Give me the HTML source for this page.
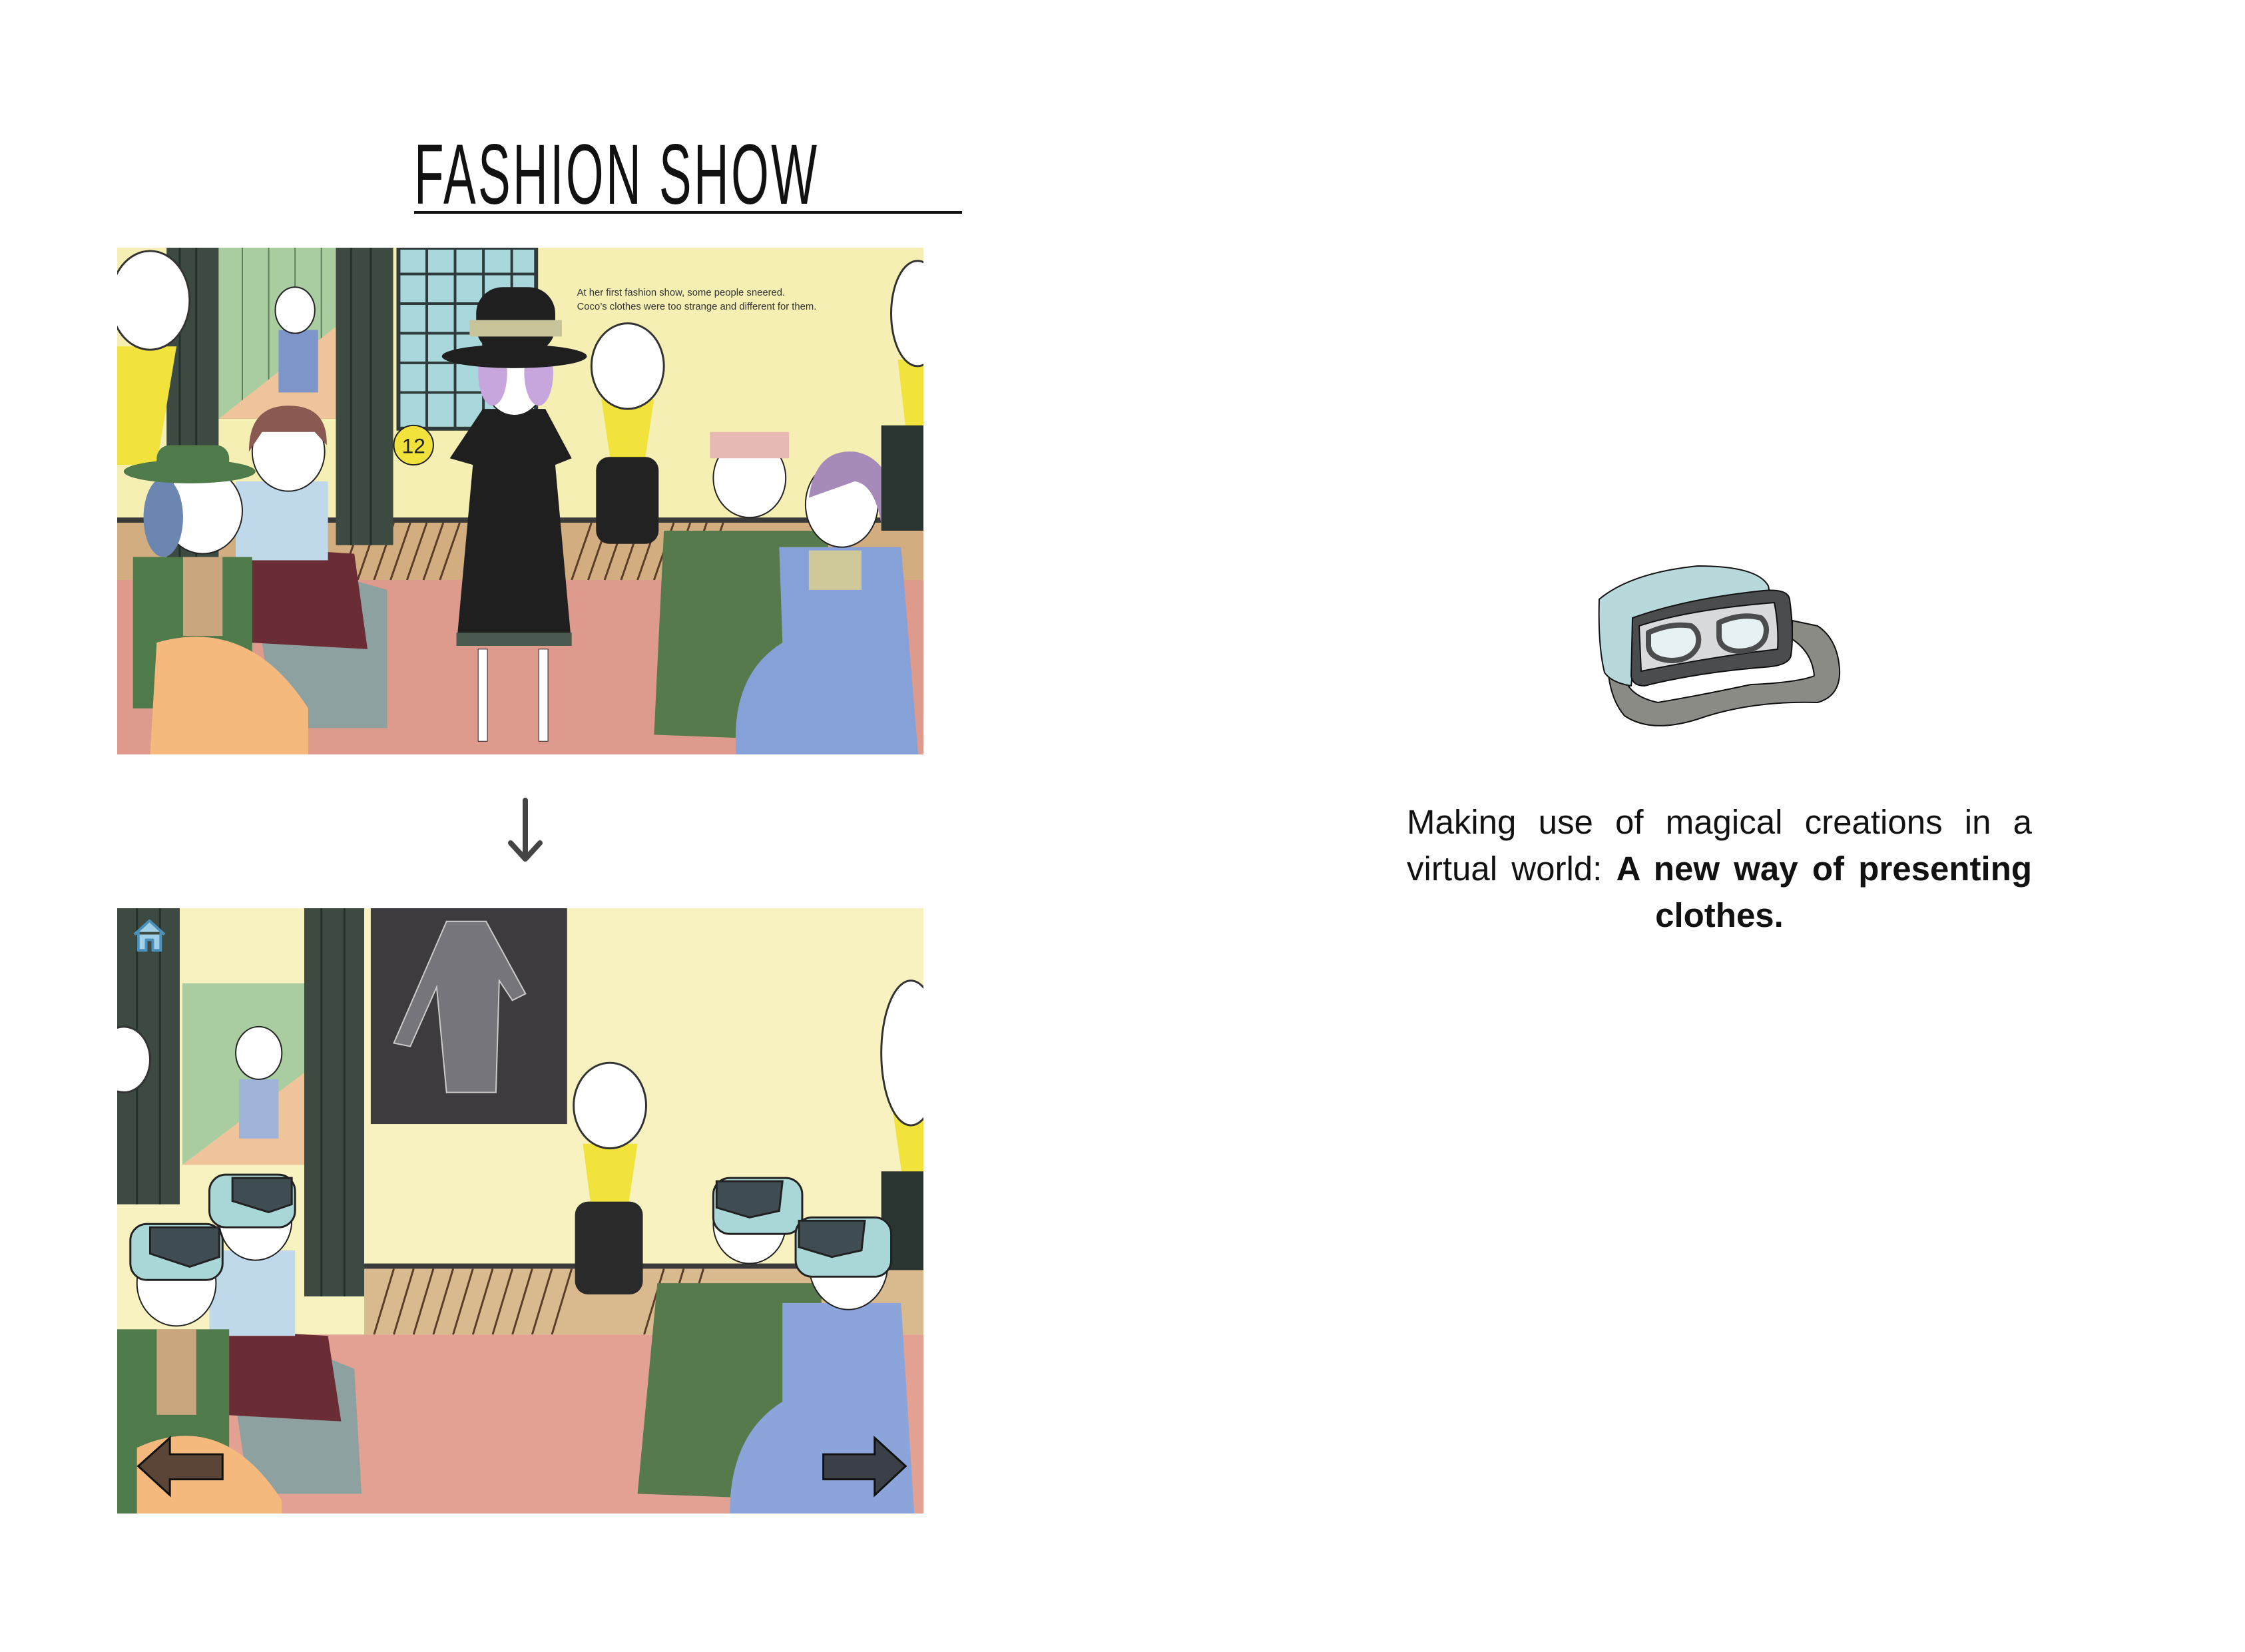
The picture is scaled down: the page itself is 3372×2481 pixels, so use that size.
<!DOCTYPE html>
<html><head><meta charset="utf-8"><style>
html,body{margin:0;padding:0;background:#fff;}
body{width:3372px;height:2481px;position:relative;overflow:hidden;font-family:"Liberation Sans",sans-serif;}
.abs{position:absolute;}
#title{left:622px;top:200px;width:640px;height:125px;font-size:128px;line-height:125px;color:#111;white-space:nowrap;transform-origin:0 0;transform:scaleX(0.57);letter-spacing:6px;}
#uline{left:622px;top:317px;width:823px;height:4px;background:#111;}
#txt{left:2113px;top:1200px;width:939px;font-size:51px;line-height:70px;color:#111;text-align:justify;text-align-last:center;}
</style></head><body>
<div id="title" class="abs">FASHION SHOW</div>
<div id="uline" class="abs"></div>

<!-- Image 1 -->
<svg class="abs" style="left:176px;top:372px" width="1211" height="761" viewBox="0 0 1224 770" preserveAspectRatio="none">
<rect width="1224" height="770" fill="#f5efb4"/>
<rect x="154" y="0" width="178" height="260" fill="#a9cda0"/>
<g stroke="#5f7d5a" stroke-width="2"><line x1="190" y1="0" x2="190" y2="260"/><line x1="230" y1="0" x2="230" y2="260"/><line x1="270" y1="0" x2="270" y2="260"/><line x1="310" y1="0" x2="310" y2="260"/></g>
<polygon points="154,260 332,120 332,260" fill="#f0c49b"/>
<rect x="427" y="0" width="209" height="275" fill="#a9d8dc"/>
<g stroke="#2f3a3a" stroke-width="4"><line x1="470" y1="0" x2="470" y2="275"/><line x1="513" y1="0" x2="513" y2="275"/><line x1="556" y1="0" x2="556" y2="275"/><line x1="599" y1="0" x2="599" y2="275"/><line x1="427" y1="40" x2="636" y2="40"/><line x1="427" y1="85" x2="636" y2="85"/><line x1="427" y1="130" x2="636" y2="130"/><line x1="427" y1="175" x2="636" y2="175"/><line x1="427" y1="220" x2="636" y2="220"/></g>
<rect x="427" y="0" width="209" height="275" fill="none" stroke="#2f3a3a" stroke-width="6"/>
<rect x="0" y="410" width="1224" height="8" fill="#3a3a3a"/>
<rect x="0" y="418" width="1224" height="88" fill="#d2ad80"/>
<g stroke="#5a3d28" stroke-width="3">
<line x1="340" y1="505" x2="370" y2="418"/><line x1="365" y1="505" x2="395" y2="418"/><line x1="390" y1="505" x2="420" y2="418"/><line x1="415" y1="505" x2="445" y2="418"/><line x1="440" y1="505" x2="470" y2="418"/><line x1="465" y1="505" x2="495" y2="418"/><line x1="490" y1="505" x2="520" y2="418"/><line x1="690" y1="505" x2="720" y2="418"/><line x1="715" y1="505" x2="745" y2="418"/><line x1="740" y1="505" x2="770" y2="418"/><line x1="765" y1="505" x2="795" y2="418"/><line x1="790" y1="505" x2="820" y2="418"/><line x1="815" y1="505" x2="845" y2="418"/><line x1="840" y1="505" x2="870" y2="418"/><line x1="865" y1="505" x2="895" y2="418"/><line x1="890" y1="505" x2="920" y2="418"/></g>
<rect x="0" y="505" width="1224" height="265" fill="#de9b8d"/>
<rect x="75" y="0" width="79" height="500" fill="#3c4a42"/>
<rect x="332" y="0" width="87" height="452" fill="#3c4a42"/>
<g stroke="#22302a" stroke-width="3"><line x1="95" y1="0" x2="95" y2="500"/><line x1="120" y1="0" x2="120" y2="500"/><line x1="355" y1="0" x2="355" y2="452"/><line x1="385" y1="0" x2="385" y2="452"/></g>
<polygon points="0,150 90,150 60,330 0,330" fill="#f2e33c"/>
<ellipse cx="50" cy="80" rx="60" ry="75" fill="#fff" stroke="#333" stroke-width="3"/>
<polygon points="1185,170 1224,170 1224,300 1200,300" fill="#f2e33c"/>
<ellipse cx="1215" cy="100" rx="40" ry="80" fill="#fff" stroke="#333" stroke-width="3"/>
<polygon points="735,230 815,230 800,330 750,330" fill="#f2e33c"/>
<ellipse cx="775" cy="180" rx="55" ry="65" fill="#fff" stroke="#333" stroke-width="3"/>
<rect x="727" y="318" width="95" height="132" rx="20" fill="#222"/>
<rect x="245" y="125" width="60" height="95" fill="#7d95c8"/>
<ellipse cx="270" cy="95" rx="30" ry="35" fill="#fff" stroke="#222" stroke-width="2"/>
<rect x="548" y="610" width="14" height="140" fill="#fff" stroke="#222"/>
<rect x="640" y="610" width="14" height="140" fill="#fff" stroke="#222"/>
<polygon points="555,245 650,245 690,320 665,330 690,605 515,605 540,330 505,320" fill="#1f1f1f"/>
<rect x="515" y="585" width="175" height="20" fill="#4a5a50"/>
<ellipse cx="603" cy="195" rx="48" ry="60" fill="#fff" stroke="#222" stroke-width="2"/>
<ellipse cx="570" cy="190" rx="22" ry="50" fill="#c6a6dc"/>
<ellipse cx="640" cy="190" rx="22" ry="50" fill="#c6a6dc"/>
<ellipse cx="603" cy="165" rx="110" ry="18" fill="#1f1f1f"/>
<rect x="545" y="60" width="120" height="100" rx="40" fill="#1f1f1f"/>
<rect x="535" y="110" width="140" height="25" fill="#c8c49a"/>
<circle cx="450" cy="300" r="30" fill="#f2e33c" stroke="#222" stroke-width="2"/>
<text x="450" y="312" font-size="32" text-anchor="middle" fill="#222">12</text>
<polygon points="198,460 410,520 410,730 240,730" fill="#8da2a0"/>
<polygon points="195,455 360,465 380,610 200,600" fill="#6a2c35"/>
<rect x="180" y="355" width="140" height="120" fill="#bfd9ea"/>
<ellipse cx="260" cy="310" rx="55" ry="60" fill="#fff" stroke="#222" stroke-width="2"/>
<path d="M200,310 Q200,240 260,240 Q320,240 318,300 L300,280 L220,280 Z" fill="#8a5a52"/>
<polygon points="24,470 205,470 205,700 24,700" fill="#4f7a4a"/>
<path d="M60,600 Q200,560 290,700 L290,770 L50,770 Z" fill="#f5b97e"/>
<rect x="100" y="470" width="60" height="120" fill="#c9a67e"/>
<ellipse cx="130" cy="400" rx="60" ry="65" fill="#fff" stroke="#222" stroke-width="2"/>
<ellipse cx="70" cy="410" rx="30" ry="60" fill="#6b86b0"/>
<ellipse cx="110" cy="340" rx="100" ry="18" fill="#4f7a4a"/>
<rect x="60" y="300" width="110" height="45" rx="20" fill="#4f7a4a"/>
<path d="M830,430 L1080,430 L1070,750 L815,740 Z" fill="#577a4c"/>
<ellipse cx="960" cy="350" rx="55" ry="60" fill="#fff" stroke="#222" stroke-width="2"/>
<rect x="900" y="280" width="120" height="40" fill="#e8b8b5"/>
<path d="M1005,455 L1190,455 L1216,770 L940,770 Q930,650 1010,600 Z" fill="#86a0d8"/>
<rect x="1050" y="460" width="80" height="60" fill="#cfc898"/>
<ellipse cx="1100" cy="390" rx="55" ry="65" fill="#fff" stroke="#222" stroke-width="2"/>
<path d="M1050,380 Q1060,305 1120,310 Q1180,320 1185,420 L1160,420 Q1150,360 1120,355 Z" fill="#a68ab8"/>
<rect x="1160" y="270" width="64" height="160" fill="#2a3430"/>
<text x="698" y="73" font-size="15" fill="#333">At her first fashion show, some people sneered.</text>
<text x="698" y="94" font-size="15" fill="#333">Coco’s clothes were too strange and different for them.</text>
</svg>

<svg class="abs" style="left:759px;top:1198px" width="60" height="100" viewBox="0 0 60 100">
<path d="M30,4 L30,92 M8,68 L30,92 L52,68" fill="none" stroke="#444" stroke-width="8" stroke-linecap="round" stroke-linejoin="round"/>
</svg>

<!-- Image 2 -->
<svg class="abs" style="left:176px;top:1364px" width="1211" height="909" viewBox="0 0 1224 920" preserveAspectRatio="none">
<rect width="1224" height="920" fill="#f7f2bf"/>
<rect x="99" y="114" width="185" height="276" fill="#a9cda0"/>
<polygon points="99,390 284,250 284,390" fill="#f0c49b"/>
<rect x="0" y="0" width="95" height="450" fill="#3c4a42"/>
<rect x="284" y="0" width="91" height="590" fill="#3c4a42"/>
<g stroke="#22302a" stroke-width="3"><line x1="30" y1="0" x2="30" y2="450"/><line x1="65" y1="0" x2="65" y2="450"/><line x1="310" y1="0" x2="310" y2="590"/><line x1="345" y1="0" x2="345" y2="590"/></g>
<rect x="385" y="0" width="298" height="328" fill="#3d3a40"/>
<path d="M500,20 L560,20 L620,130 L600,140 L580,110 L575,280 L500,280 L485,120 L445,210 L420,205 Z" fill="#77757c" stroke="#ccc" stroke-width="2"/>
<rect x="375" y="540" width="849" height="8" fill="#3a3a3a"/>
<rect x="375" y="548" width="849" height="100" fill="#d9b98e"/>
<g stroke="#5a3d28" stroke-width="3"><line x1="390" y1="648" x2="420" y2="548"/><line x1="420" y1="648" x2="450" y2="548"/><line x1="450" y1="648" x2="480" y2="548"/><line x1="480" y1="648" x2="510" y2="548"/><line x1="510" y1="648" x2="540" y2="548"/><line x1="540" y1="648" x2="570" y2="548"/><line x1="570" y1="648" x2="600" y2="548"/><line x1="600" y1="648" x2="630" y2="548"/><line x1="630" y1="648" x2="660" y2="548"/><line x1="660" y1="648" x2="690" y2="548"/><line x1="800" y1="648" x2="830" y2="548"/><line x1="830" y1="648" x2="860" y2="548"/><line x1="860" y1="648" x2="890" y2="548"/></g>
<rect x="0" y="648" width="1224" height="272" fill="#e2a193"/>
<polygon points="707,358 790,358 775,458 720,458" fill="#f2e33c"/>
<ellipse cx="748" cy="300" rx="55" ry="65" fill="#fff" stroke="#333" stroke-width="3"/>
<rect x="695" y="446" width="103" height="141" rx="20" fill="#2a2a2a"/>
<polygon points="1175,290 1224,290 1224,430 1195,430" fill="#f2e33c"/>
<ellipse cx="1205" cy="220" rx="45" ry="110" fill="#fff" stroke="#333" stroke-width="3"/>
<ellipse cx="10" cy="230" rx="40" ry="50" fill="#fff" stroke="#333" stroke-width="3"/>
<rect x="185" y="260" width="60" height="90" fill="#9fb3d8"/>
<ellipse cx="215" cy="220" rx="35" ry="40" fill="#fff" stroke="#222" stroke-width="2"/>
<polygon points="160,620 360,700 371,890 200,890" fill="#8da2a0"/>
<polygon points="150,640 320,650 340,780 160,770" fill="#6a2c35"/>
<rect x="140" y="520" width="130" height="130" fill="#bfd9ea"/>
<ellipse cx="210" cy="475" rx="55" ry="60" fill="#fff" stroke="#222" stroke-width="2"/>
<rect x="0" y="640" width="170" height="280" fill="#4f7a4a"/>
<path d="M30,820 Q160,760 250,900 L250,920 L30,920 Z" fill="#f5b97e"/>
<rect x="60" y="640" width="60" height="130" fill="#c9a67e"/>
<ellipse cx="90" cy="570" rx="60" ry="65" fill="#fff" stroke="#222" stroke-width="2"/>
<path d="M820,570 L1070,570 L1060,900 L790,890 Z" fill="#577a4c"/>
<ellipse cx="960" cy="480" rx="55" ry="60" fill="#fff" stroke="#222" stroke-width="2"/>
<path d="M1010,600 L1190,600 L1210,920 L930,920 Q930,800 1010,750 Z" fill="#8ba5db"/>
<ellipse cx="1110" cy="540" rx="60" ry="70" fill="#fff" stroke="#222" stroke-width="2"/>
<rect x="1160" y="400" width="64" height="150" fill="#2a3430"/>
<g stroke="#222" stroke-width="3">
<rect x="20" y="480" width="140" height="85" rx="25" fill="#a9d6d6"/><path d="M50,485 L155,485 L155,530 L110,545 L50,525 Z" fill="#3f4c52"/>
<rect x="140" y="405" width="130" height="80" rx="25" fill="#a9d6d6"/><path d="M175,410 L265,410 L265,450 L230,462 L175,445 Z" fill="#3f4c52"/>
<rect x="905" y="410" width="135" height="85" rx="25" fill="#a9d6d6"/><path d="M910,415 L1010,415 L1005,460 L960,470 L910,455 Z" fill="#3f4c52"/>
<rect x="1030" y="470" width="145" height="90" rx="25" fill="#a9d6d6"/><path d="M1035,475 L1135,475 L1130,520 L1085,530 L1035,515 Z" fill="#3f4c52"/>
</g>
<path d="M26,40 L49,19 L72,40 M32,36 L32,64 L44,64 L44,48 L54,48 L54,64 L66,64 L66,36" fill="#9fd0e8" stroke="#4a90b8" stroke-width="4" stroke-linejoin="round"/>
<path d="M32,848 L80,805 L80,830 L160,830 L160,868 L80,868 L80,892 Z" fill="#5a4536" stroke="#111" stroke-width="3"/>
<path d="M1197,848 L1150,805 L1150,830 L1072,830 L1072,868 L1150,868 L1150,892 Z" fill="#3b4048" stroke="#111" stroke-width="3"/>
</svg>

<!-- goggles -->
<svg class="abs" style="left:2400px;top:840px" width="420" height="290" viewBox="0 0 420 290">
<g stroke="#111" stroke-width="2" stroke-linejoin="round">
<path d="M15,125 Q10,200 40,235 Q80,262 150,240 Q230,212 330,215 Q365,205 363,165 Q360,120 330,100 L292,92 L292,120 Q322,140 325,175 Q300,185 230,188 Q150,205 90,215 Q45,205 40,175 L35,125 Z" fill="#8b8b86"/>
<path d="M2,60 Q50,20 150,10 Q240,10 256,40 L258,50 L60,90 L50,190 Q20,185 10,170 Q0,130 2,60 Z" fill="#b8d9db"/>
<path d="M52,88 Q130,60 240,48 Q285,42 288,60 Q295,110 290,145 Q286,160 250,162 Q150,170 70,190 Q52,190 50,175 Z" fill="#4a4c4e"/>
<path d="M62,100 Q140,75 265,65 Q272,100 270,135 Q180,145 65,168 Z" fill="#d8dadb"/>
<path d="M76,110 Q110,95 140,100 Q155,110 150,130 Q140,152 110,152 Q78,150 76,130 Z" fill="#e6f1f3" stroke="#4a4c4e" stroke-width="8"/>
<path d="M182,95 Q215,80 245,88 Q258,100 250,120 Q240,138 210,138 Q182,135 182,115 Z" fill="#e6f1f3" stroke="#4a4c4e" stroke-width="8"/>
</g>
</svg>

<div id="txt" class="abs">Making use of magical creations in a virtual world: <b>A new way of presenting clothes.</b></div>
</body></html>
